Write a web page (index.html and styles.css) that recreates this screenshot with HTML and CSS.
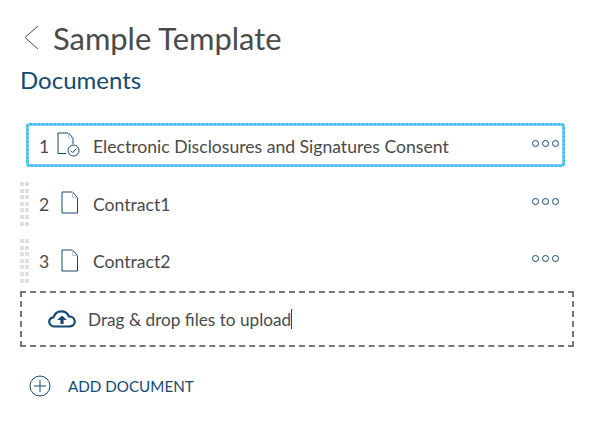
FILE: index.html
```html
<!DOCTYPE html>
<html lang="en">
<head>
    <title>Sample Template</title>
    <link rel="stylesheet" href="styles.css">
</head>
<body>
    <div class="page">
        <div class="title-row">
            <svg class="back-icon" width="18" height="26" viewBox="0 0 18 26"><path d="M16 2 L3 13.5 L16 25" fill="none" stroke="#4a4a4a" stroke-width="1"/></svg>
            <h1>Sample Template</h1>
        </div>
        <h2>Documents</h2>

        <div class="doc-list">
            <div class="doc-row doc-row-active">
                <span class="doc-num">1</span>
                <svg class="doc-icon" width="24" height="26" viewBox="0 0 24 26">
                    <path d="M9 21.5 H1 V1 H11.5 L16 6 V12" fill="none" stroke="#154a70" stroke-width="1"/>
                    <path d="M11.5 1 V6 H16" fill="none" stroke="#b9c4cf" stroke-width="1"/>
                    <circle cx="16.5" cy="18.5" r="5.5" fill="#fff" stroke="#154a70" stroke-width="1"/>
                    <path d="M13.8 18.5 L15.8 20.6 L19.3 16.6" fill="none" stroke="#154a70" stroke-width="1"/>
                </svg>
                <span class="doc-name">Electronic Disclosures and Signatures Consent</span>
                <span class="doc-more"><i></i><i></i><i></i></span>
            </div>
            <div class="doc-row">
                <span class="grip"></span>
                <span class="doc-num">2</span>
                <svg class="doc-icon" width="24" height="24" viewBox="0 0 24 24">
                    <path d="M1 1 H11.5 L16.5 6.5 V22 H1 Z" fill="none" stroke="#154a70" stroke-width="1"/>
                    <path d="M11.5 1 V6.5 H16.5" fill="none" stroke="#b9c4cf" stroke-width="1"/>
                </svg>
                <span class="doc-name">Contract1</span>
                <span class="doc-more"><i></i><i></i><i></i></span>
            </div>
            <div class="doc-row">
                <span class="grip"></span>
                <span class="doc-num">3</span>
                <svg class="doc-icon" width="24" height="24" viewBox="0 0 24 24">
                    <path d="M1 1 H11.5 L16.5 6.5 V22 H1 Z" fill="none" stroke="#154a70" stroke-width="1"/>
                    <path d="M11.5 1 V6.5 H16.5" fill="none" stroke="#b9c4cf" stroke-width="1"/>
                </svg>
                <span class="doc-name">Contract2</span>
                <span class="doc-more"><i></i><i></i><i></i></span>
            </div>
        </div>

        <div class="drop-zone">
            <svg class="cloud-icon" width="28" height="18" viewBox="0 0 28 18">
                <path d="M7 16.5 C3.5 16.5 1.2 14.5 1.2 11.8 C1.2 9.4 3 7.6 5.6 7.3 C6.6 3.6 9.8 1.3 13.4 1.3 C17 1.3 19.8 3.4 20.8 6.3 C24.2 6.4 26.8 8.6 26.8 11.6 C26.8 14.5 24.4 16.5 21 16.5 Z" fill="none" stroke="#154a70" stroke-width="2.2"/>
                <path d="M14 5.5 L18.8 10 H15.6 V14 H12.4 V10 H9.2 Z" fill="#154a70"/>
            </svg>
            <span class="drop-text">Drag &amp; drop files to upload</span><span class="caret"></span>
        </div>

        <div class="add-doc">
            <svg class="plus-icon" width="22" height="22" viewBox="0 0 22 22">
                <circle cx="11" cy="11" r="10" fill="none" stroke="#154a70" stroke-width="1"/>
                <path d="M11 5 V17 M5 11 H17" stroke="#154a70" stroke-width="1"/>
            </svg>
            <span>ADD DOCUMENT</span>
        </div>
    </div>
</body>
</html>
```

FILE: styles.css
```css
body {
    margin: 0;
    background: #ffffff;
    font-family: Lato, sans-serif;
    color: #4a4a4a;
}

.page {
    width: 554px;
    padding: 20px 0 0 20px;
}

.title-row {
    display: flex;
    align-items: center;
    height: 36px;
}

.back-icon {
    margin: -3px 0 0 2px;
}

h1 {
    margin: 2px 0 0 13px;
    font-size: 30.9px;
    font-weight: 400;
    line-height: 36px;
    color: #4a4a4a;
}

h2 {
    margin: 9px 0 0 0;
    font-size: 24px;
    font-weight: 400;
    line-height: 30px;
    color: #154a70;
}

.doc-list {
    margin-top: 28px;
}

.doc-row {
    position: relative;
    display: flex;
    align-items: center;
    height: 57.5px;
    padding-left: 19px;
    font-size: 17.6px;
}

.doc-row-active {
    height: 44px;
    margin: 0 9px 7.5px 6px;
    padding-left: 10px;
    border: 3px solid #74cff6;
    outline: 2px dotted #35b5f1;
    outline-offset: -2px;
    border-radius: 4px;
    box-sizing: border-box;
}

.grip {
    position: absolute;
    left: 0;
    top: 7px;
    width: 9px;
    height: 44px;
    background-image:
        linear-gradient(#e0e0e0, #e0e0e0),
        linear-gradient(#e0e0e0, #e0e0e0);
    background-repeat: repeat-y;
    background-position: 0 0, 5px 0;
    background-size: 4px 4px, 4px 4px;
    -webkit-mask-image: repeating-linear-gradient(#000 0, #000 4px, transparent 4px, transparent 6.6px);
}

.doc-num {
    width: 17px;
    padding-top: 2px;
}

.doc-icon {
    margin-left: 5px;
    flex-shrink: 0;
}

.doc-row-active .doc-icon {
    margin-left: 1px;
}

.doc-row-active .doc-name {
    margin-left: 12px;
}

.doc-name {
    margin-left: 8px;
    padding-top: 2px;
    flex: 1;
}

.doc-more {
    display: flex;
    gap: 3px;
    margin: -4px 15px 0 0;
}

.doc-more i {
    display: block;
    width: 7px;
    height: 7px;
    border: 1.5px solid #154a70;
    border-radius: 50%;
    box-sizing: border-box;
}

.doc-row-active .doc-more {
    margin-right: 3px;
}

.drop-zone {
    display: flex;
    align-items: center;
    height: 56px;
    margin-top: 1.5px;
    padding-left: 26px;
    border: 2px dashed #777777;
    box-sizing: border-box;
    font-size: 17.2px;
}

.drop-text {
    margin-left: 12px;
}

.caret {
    width: 1px;
    height: 20px;
    background: #154a70;
}

.add-doc {
    display: flex;
    align-items: center;
    margin: 28px 0 0 9px;
    font-size: 15.2px;
    color: #154a70;
}

.add-doc span {
    margin-left: 17px;
}
```
